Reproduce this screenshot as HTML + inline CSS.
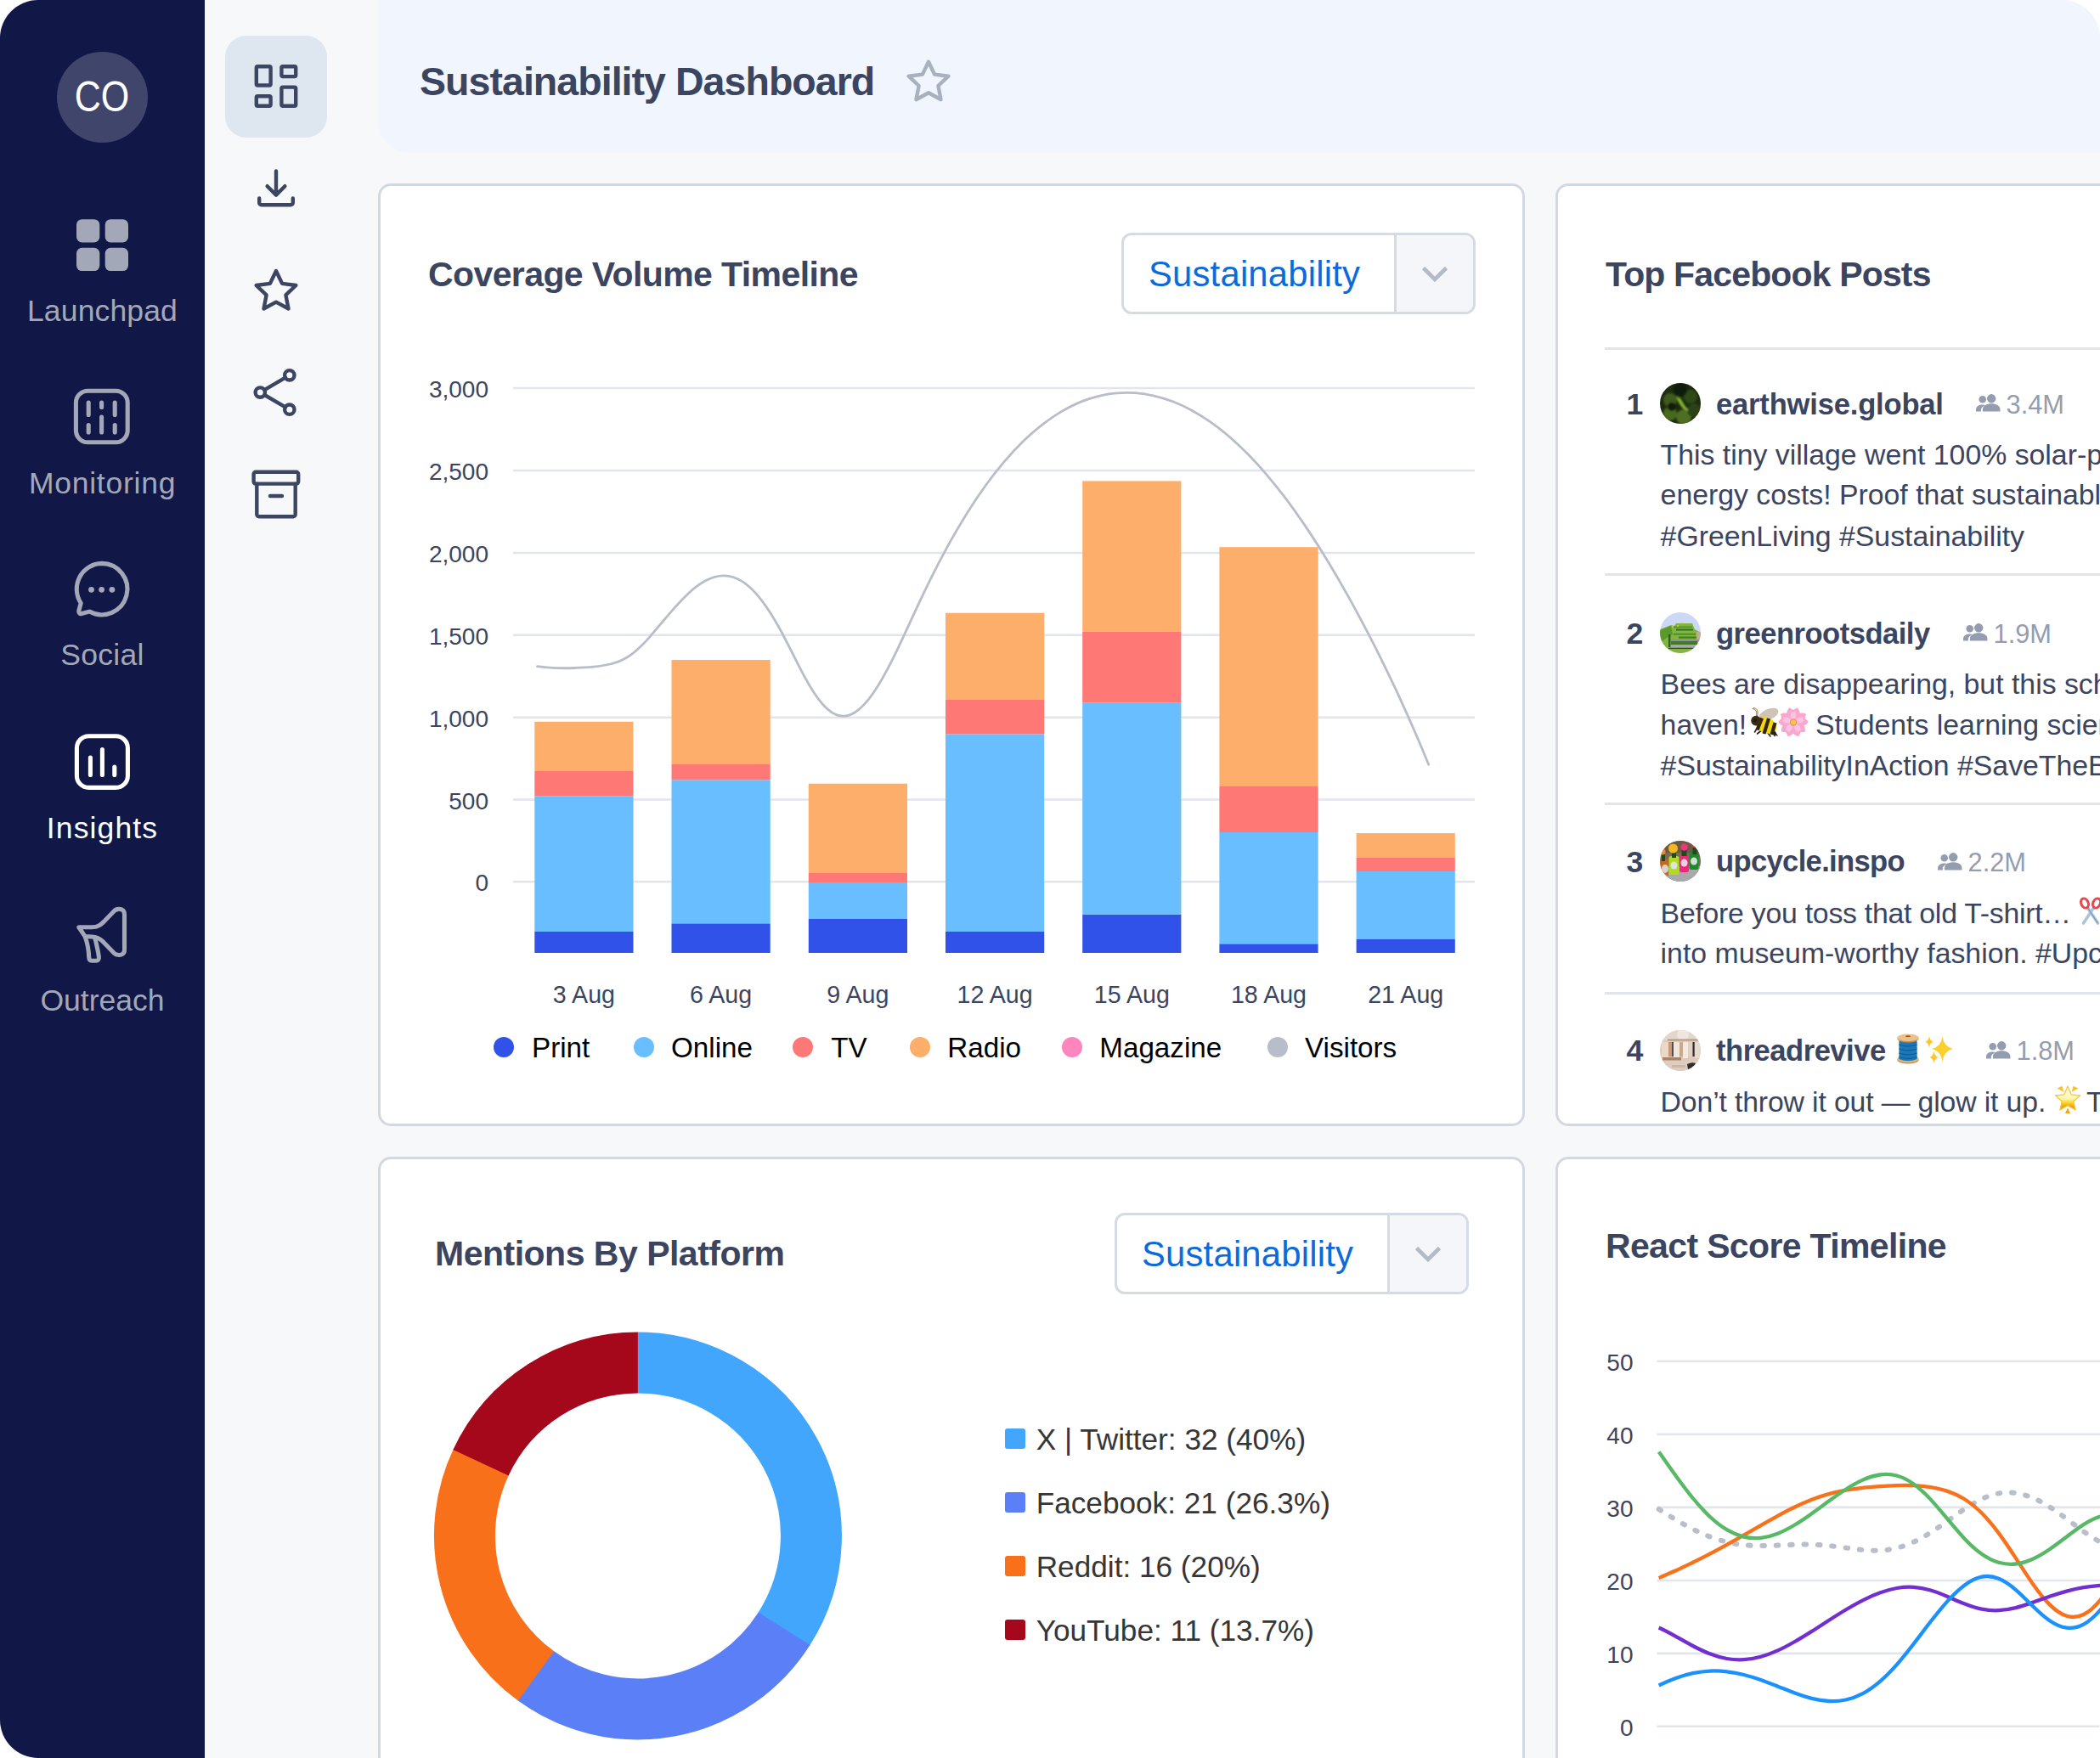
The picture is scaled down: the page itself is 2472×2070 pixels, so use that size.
<!DOCTYPE html>
<html lang="en">
<head>
<meta charset="utf-8">
<title>Sustainability Dashboard</title>
<style>
html,body{margin:0;padding:0;background:#ffffff;}
body{width:2472px;height:2070px;overflow:hidden;font-family:"Liberation Sans",sans-serif;}
#app{position:relative;width:2472px;height:2070px;border-radius:45px;overflow:hidden;background:#f6f8fa;}
#app span,#app h1,#app h2,#app p,#app b{position:absolute;margin:0;line-height:1;white-space:nowrap;font-weight:400;}
#app h1,#app h2,#app b{font-weight:700;}
svg{position:absolute;left:0;top:0;overflow:visible;}
nav.primary{position:absolute;left:0;top:0;width:241px;height:2070px;background:#111746;}
.avatar{position:absolute;left:67px;top:60.5px;width:107px;height:107px;border-radius:50%;background:#40466b;}
nav.secondary{position:absolute;left:241px;top:0;width:170px;height:2070px;background:#f7f8fa;}
.active-btn{position:absolute;left:265px;top:41.5px;width:120px;height:120px;border-radius:25px;background:#dee6f0;}
header.top{position:absolute;left:445px;top:-40px;width:2100px;height:220px;border-radius:0 0 0 38px;background:#f0f5fe;}
.card{position:absolute;box-sizing:border-box;border:3px solid #d2d8e0;border-radius:15px;background:#ffffff;overflow:hidden;}
.dd{position:absolute;box-sizing:border-box;border:3px solid #d5dbe3;border-radius:12px;background:#ffffff;overflow:hidden;}
.dd i{position:absolute;right:0;top:0;bottom:0;width:90px;border-left:3px solid #d5dbe3;background:#f5f6f9;}
.rule{position:absolute;height:3px;background:#e1e5ea;}
.sw{position:absolute;width:24px;height:24px;border-radius:3px;}
.dot{position:absolute;width:24px;height:24px;border-radius:50%;}
</style>
</head>
<body>
<div id="app">

<nav class="primary">
<div class="avatar"></div>
<span style="left:120.0px;top:89.2px;font-size:50px;color:#ffffff;transform:translateX(-50%);transform:translateX(-50%) scaleX(0.86);">CO</span>
<svg width="241" height="2070" viewBox="0 0 241 2070" fill="none" stroke-linecap="round" stroke-linejoin="round">
<g fill="#a3a8b9"><rect x="90" y="258.2" width="27.3" height="27.3" rx="6.5"/><rect x="123.7" y="258.2" width="27.3" height="27.3" rx="6.5"/><rect x="90" y="291.8" width="27.3" height="27.3" rx="6.5"/><rect x="123.7" y="291.8" width="27.3" height="27.3" rx="6.5"/></g>
<g stroke="#a3a8b9" stroke-width="5.1">
<rect x="89.4" y="460.2" width="60.8" height="60.6" rx="14"/>
<path d="M104.2,474v14.5M104.2,500.5v8.5M119.6,474v5.5M119.6,491v18M135.2,474v14.5M135.2,500.5v8.5"/>
<path d="M119.8,663.4a30.2,30.2 0 1 1 -14.6,56.7l-9.200,2.400a2.600,2.600 0 0 1 -3.200,-3.200l2.400,-9.200a30.200,30.200 0 0 1 24.600,-46.700z"/>
</g>
<g fill="#a3a8b9"><circle cx="107.5" cy="694.3" r="3.4"/><circle cx="119.6" cy="694.3" r="3.4"/><circle cx="131.9" cy="694.3" r="3.4"/></g>
<g stroke="#ffffff" stroke-width="5.1">
<rect x="90.4" y="866.8" width="60" height="60.6" rx="14"/>
<path d="M106.4,892v20.5M120.4,882.5v30M134.8,903v9.5"/>
</g>
<g stroke="#a3a8b9" stroke-width="5.1">
<path d="M92.800,1091.800H108C116,1091.800 119.500,1088 123,1084.500L134.300,1072.800C137,1070 141,1070.200 143.500,1071C146,1072 146.500,1074.500 146.500,1077V1118.500C146.500,1123 143,1124.800 140,1124.500C137,1124.300 136,1124 134.500,1122.500L121,1108.500C117,1104.500 113,1103.200 108,1103L100.100,1102.600Z"/>
<path d="M100.500,1104C103,1111 104.500,1120 104.700,1127C104.800,1130 106,1131.300 108,1131.300H113C115.500,1131.300 116.700,1129.500 116.400,1127C115.500,1119 113,1110 111.800,1104"/>
</g>
</svg>
<span style="left:120.5px;top:348.5px;font-size:35.5px;color:#a3a8b9;letter-spacing:0.15px;transform:translateX(-50%);">Launchpad</span>
<span style="left:120.5px;top:551.5px;font-size:35.5px;color:#a3a8b9;letter-spacing:0.75px;transform:translateX(-50%);">Monitoring</span>
<span style="left:120.5px;top:753.9px;font-size:35.5px;color:#a3a8b9;letter-spacing:0.3px;transform:translateX(-50%);">Social</span>
<span style="left:120.5px;top:957.9px;font-size:35.5px;color:#ffffff;letter-spacing:1.15px;transform:translateX(-50%);">Insights</span>
<span style="left:120.5px;top:1160.9px;font-size:35.5px;color:#a3a8b9;transform:translateX(-50%);">Outreach</span>
</nav>
<nav class="secondary"></nav>
<header class="top"></header>
<div class="active-btn"></div>
<svg width="2472" height="700" viewBox="0 0 2472 700" fill="none" stroke="#3c4662" stroke-width="4.4" stroke-linecap="round" stroke-linejoin="round">
<rect x="301.8" y="78.2" width="16.8" height="22.3" rx="1.5"/><rect x="331.4" y="78.2" width="16.8" height="11.9" rx="1.5"/><rect x="301.8" y="113.2" width="16.8" height="11.6" rx="1.5"/><rect x="331.4" y="102.6" width="16.8" height="22.2" rx="1.5"/>
<path d="M325,201.5v27.5M314.6,219.2l10.400,10.400l10.400,-10.400M305.2,233.500v5.200a2.500,2.500 0 0 0 2.500,2.500h34.600a2.500,2.500 0 0 0 2.500,-2.500v-5.200"/>
<path d="M325.0,319.0 L332.1,333.9 L348.4,336.0 L336.4,347.3 L339.5,363.5 L325.0,355.6 L310.5,363.5 L313.6,347.3 L301.6,336.0 L317.9,333.9Z"/>
<circle cx="340.8" cy="441.8" r="5.7"/><circle cx="306.3" cy="462.1" r="5.7"/><circle cx="340.8" cy="482.2" r="5.7"/><path d="M311.300,459.200l24.600,-14.500M311.300,465l24.600,14.300"/>
<rect x="298.600" y="555.800" width="52.600" height="13.800" rx="2.500"/><path d="M302.300,569.600v36.200a2.500,2.500 0 0 0 2.500,2.500h40.400a2.500,2.500 0 0 0 2.500,-2.500v-36.200M318,584h14"/>
<path stroke="#a9b0be" d="M1093.0,72.7 L1100.1,87.6 L1116.4,89.7 L1104.4,101.0 L1107.5,117.2 L1093.0,109.3 L1078.5,117.2 L1081.6,101.0 L1069.6,89.7 L1085.9,87.6Z"/>
</svg>
<h1 style="left:494.0px;top:72.6px;font-size:46.5px;font-weight:700;color:#3b4560;letter-spacing:-0.95px;">Sustainability Dashboard</h1>
<section class="card" style="left:445px;top:216px;width:1350px;height:1110px"></section>
<h2 style="left:504.0px;top:303.3px;font-size:41px;font-weight:700;color:#3b4560;letter-spacing:-0.6px;">Coverage Volume Timeline</h2>
<div class="dd" style="left:1320px;top:274px;width:417px;height:96px"><i></i></div>
<span style="left:1352.0px;top:301.6px;font-size:41.8px;color:#0c6bd9;letter-spacing:0.2px;">Sustainability</span>
<svg width="2472" height="2070" viewBox="0 0 2472 2070" fill="none" stroke="#b4bbc8" stroke-width="4.6" stroke-linecap="butt" stroke-linejoin="miter"><path d="M1675.5,315.5l13.500,13.500l13.500,-13.500"/></svg>
<svg width="2472" height="2070" viewBox="0 0 2472 2070" fill="none">
<g stroke="#e2e5eb" stroke-width="2.6"><path d="M604,457H1736"/><path d="M604,554H1736"/><path d="M604,651H1736"/><path d="M604,747.8H1736"/><path d="M604,844.7H1736"/><path d="M604,941.5H1736"/><path d="M604,1038.3H1736"/></g>
<path d="M632.5,784.6 C639.8,785.7 647.2,786.4 654.5,786.6 C661.8,786.8 669.2,786.8 676.5,786.5 C683.8,786.2 691.2,785.8 698.5,785.1 C705.8,784.4 713.2,783.4 720.5,781.5 C727.8,779.6 735.2,776.5 742.5,771.2 C749.8,765.9 757.2,758.6 764.5,750.3 C771.8,742.0 779.2,732.9 786.5,724.3 C793.8,715.7 801.2,707.4 808.5,700.4 C815.8,693.4 823.2,687.7 830.5,683.8 C837.8,679.9 845.2,677.8 852.5,677.9 C859.8,678.0 867.2,680.4 874.5,685.2 C881.8,690.0 889.2,697.3 896.5,706.8 C903.8,716.3 911.2,728.1 918.5,741.5 C925.8,754.9 933.2,770.0 940.5,784.3 C947.8,798.6 955.2,811.8 962.5,821.8 C969.8,831.8 977.2,838.7 984.5,841.6 C991.8,844.5 999.2,843.3 1006.5,838.7 C1013.8,834.1 1021.2,826.0 1028.5,815.3 C1035.8,804.6 1043.2,791.3 1050.5,776.7 C1057.8,762.1 1065.2,746.1 1072.5,730.2 C1079.8,714.3 1087.2,698.6 1094.5,683.7 C1101.8,668.8 1109.2,654.7 1116.5,641.4 C1123.8,628.1 1131.2,615.7 1138.5,604.0 C1145.8,592.3 1153.2,581.4 1160.5,571.3 C1167.8,561.2 1175.2,551.8 1182.5,543.2 C1189.8,534.6 1197.2,526.8 1204.5,519.6 C1211.8,512.5 1219.2,506.0 1226.5,500.3 C1233.8,494.6 1241.2,489.5 1248.5,485.1 C1255.8,480.7 1263.2,477.0 1270.5,473.9 C1277.8,470.8 1285.2,468.4 1292.5,466.6 C1299.8,464.8 1307.2,463.5 1314.5,462.9 C1321.8,462.3 1329.2,462.2 1336.5,462.7 C1343.8,463.2 1351.2,464.4 1358.5,466.1 C1365.8,467.8 1373.2,470.0 1380.5,472.8 C1387.8,475.6 1395.2,479.0 1402.5,483.0 C1409.8,487.0 1417.2,491.5 1424.5,496.6 C1431.8,501.7 1439.2,507.4 1446.5,513.7 C1453.8,520.0 1461.2,526.9 1468.5,534.3 C1475.8,541.7 1483.2,549.7 1490.5,558.3 C1497.8,566.9 1505.2,576.0 1512.5,585.7 C1519.8,595.4 1527.2,605.6 1534.5,616.4 C1541.8,627.2 1549.2,638.4 1556.5,650.2 C1563.8,662.0 1571.2,674.3 1578.5,687.1 C1585.8,699.9 1593.2,713.1 1600.5,726.8 C1607.8,740.5 1615.2,754.6 1622.5,769.3 C1629.8,784.0 1637.2,799.2 1644.5,814.9 C1651.8,830.6 1659.2,847.0 1666.5,864.0 C1671.6,875.7 1676.6,887.8 1681.7,900.2" stroke="#b7bdc9" stroke-width="2.8" stroke-linecap="round"/>
<rect x="629.3" y="1097" width="116.2" height="25.0" fill="#3052e8"/>
<rect x="629.3" y="937.3" width="116.2" height="159.7" fill="#69beff"/>
<rect x="629.3" y="908" width="116.2" height="29.3" fill="#fe7876"/>
<rect x="629.3" y="849.8" width="116.2" height="58.2" fill="#fdae6b"/>
<rect x="790.5" y="1087.3" width="116.2" height="34.7" fill="#3052e8"/>
<rect x="790.5" y="918.3" width="116.2" height="169.0" fill="#69beff"/>
<rect x="790.5" y="900" width="116.2" height="18.3" fill="#fe7876"/>
<rect x="790.5" y="777" width="116.2" height="123.0" fill="#fdae6b"/>
<rect x="951.8" y="1082" width="116.2" height="40.0" fill="#3052e8"/>
<rect x="951.8" y="1039" width="116.2" height="43.0" fill="#69beff"/>
<rect x="951.8" y="1028" width="116.2" height="11.0" fill="#fe7876"/>
<rect x="951.8" y="922.7" width="116.2" height="105.3" fill="#fdae6b"/>
<rect x="1113" y="1097" width="116.2" height="25.0" fill="#3052e8"/>
<rect x="1113" y="864.4" width="116.2" height="232.6" fill="#69beff"/>
<rect x="1113" y="823.4" width="116.2" height="41.0" fill="#fe7876"/>
<rect x="1113" y="721.7" width="116.2" height="101.7" fill="#fdae6b"/>
<rect x="1274.2" y="1076.7" width="116.2" height="45.3" fill="#3052e8"/>
<rect x="1274.2" y="827.2" width="116.2" height="249.5" fill="#69beff"/>
<rect x="1274.2" y="743.5" width="116.2" height="83.7" fill="#fe7876"/>
<rect x="1274.2" y="566.4" width="116.2" height="177.1" fill="#fdae6b"/>
<rect x="1435.4" y="1111.3" width="116.2" height="10.7" fill="#3052e8"/>
<rect x="1435.4" y="980" width="116.2" height="131.3" fill="#69beff"/>
<rect x="1435.4" y="926" width="116.2" height="54.0" fill="#fe7876"/>
<rect x="1435.4" y="644.2" width="116.2" height="281.8" fill="#fdae6b"/>
<rect x="1596.6" y="1106" width="116.2" height="16.0" fill="#3052e8"/>
<rect x="1596.6" y="1026" width="116.2" height="80.0" fill="#69beff"/>
<rect x="1596.6" y="1010" width="116.2" height="16.0" fill="#fe7876"/>
<rect x="1596.6" y="981" width="116.2" height="29.0" fill="#fdae6b"/>
</svg>
<span style="left:575.0px;top:445.1px;font-size:28px;color:#3b4560;transform:translateX(-100%);">3,000</span>
<span style="left:575.0px;top:542.1px;font-size:28px;color:#3b4560;transform:translateX(-100%);">2,500</span>
<span style="left:575.0px;top:639.1px;font-size:28px;color:#3b4560;transform:translateX(-100%);">2,000</span>
<span style="left:575.0px;top:735.9px;font-size:28px;color:#3b4560;transform:translateX(-100%);">1,500</span>
<span style="left:575.0px;top:832.8px;font-size:28px;color:#3b4560;transform:translateX(-100%);">1,000</span>
<span style="left:575.0px;top:929.6px;font-size:28px;color:#3b4560;transform:translateX(-100%);">500</span>
<span style="left:575.0px;top:1026.4px;font-size:28px;color:#3b4560;transform:translateX(-100%);">0</span>
<span style="left:687.4px;top:1157.1px;font-size:28.6px;color:#3b4560;transform:translateX(-50%);">3 Aug</span>
<span style="left:848.6px;top:1157.1px;font-size:28.6px;color:#3b4560;transform:translateX(-50%);">6 Aug</span>
<span style="left:1009.8px;top:1157.1px;font-size:28.6px;color:#3b4560;transform:translateX(-50%);">9 Aug</span>
<span style="left:1171.1px;top:1157.1px;font-size:28.6px;color:#3b4560;transform:translateX(-50%);">12 Aug</span>
<span style="left:1332.3px;top:1157.1px;font-size:28.6px;color:#3b4560;transform:translateX(-50%);">15 Aug</span>
<span style="left:1493.5px;top:1157.1px;font-size:28.6px;color:#3b4560;transform:translateX(-50%);">18 Aug</span>
<span style="left:1654.7px;top:1157.1px;font-size:28.6px;color:#3b4560;transform:translateX(-50%);">21 Aug</span>
<div class="dot" style="left:581.3px;top:1220.7px;background:#3052e8"></div>
<span style="left:626.0px;top:1216.9px;font-size:33.2px;color:#000000;">Print</span>
<div class="dot" style="left:745.7px;top:1220.7px;background:#69beff"></div>
<span style="left:790.0px;top:1216.9px;font-size:33.2px;color:#000000;">Online</span>
<div class="dot" style="left:933.3px;top:1220.7px;background:#fe7876"></div>
<span style="left:978.3px;top:1216.9px;font-size:33.2px;color:#000000;">TV</span>
<div class="dot" style="left:1070.7px;top:1220.7px;background:#fdae6b"></div>
<span style="left:1115.3px;top:1216.9px;font-size:33.2px;color:#000000;">Radio</span>
<div class="dot" style="left:1249.7px;top:1220.7px;background:#fc86bd"></div>
<span style="left:1294.3px;top:1216.9px;font-size:33.2px;color:#000000;">Magazine</span>
<div class="dot" style="left:1491.7px;top:1220.7px;background:#b7bdc9"></div>
<span style="left:1536.0px;top:1216.9px;font-size:33.2px;color:#000000;">Visitors</span>
<section class="card" style="left:1831px;top:216px;width:900px;height:1110px">
<h2 style="left:56.0px;top:83.9px;font-size:41px;font-weight:700;color:#3b4560;letter-spacing:-0.85px;">Top Facebook Posts</h2>
<div class="rule" style="left:55px;top:189.5px;width:900px"></div>
<b style="left:80.6px;top:239.9px;font-size:35.6px;font-weight:700;color:#3b4560;">1</b>
<svg width="48" height="48" viewBox="0 0 48 48" style="left:119.6px;top:231.6px;border-radius:50%;overflow:hidden"><defs><filter id="b1"><feGaussianBlur stdDeviation="1.1"/></filter></defs><rect width="48" height="48" fill="#1d2c10"/><g filter="url(#b1)"><circle cx="12" cy="20" r="8" fill="#3f5a1c"/><circle cx="36" cy="16" r="8" fill="#2f4a18"/><circle cx="24" cy="8" r="8" fill="#0f1a09"/><circle cx="12" cy="36" r="8" fill="#4a6b1f"/><circle cx="28" cy="40" r="9" fill="#4f6e22"/><circle cx="40" cy="32" r="8" fill="#2a4215"/><circle cx="14" cy="28" r="5" fill="#0f1a09"/><path d="M19,16l5,2l8,13l-5,-1l-5,-7z" fill="#86b62b"/><path d="M27,29l5,1l1,3z" fill="#b5d86a"/></g></svg>
<b style="left:186.0px;top:239.7px;font-size:34.6px;font-weight:700;color:#3b4560;letter-spacing:-0.2px;">earthwise.global</b>
<svg width="28" height="22.4" viewBox="0 0 30 24" style="left:492.0px;top:243.9px" fill="#949db0"><circle cx="19.500" cy="6.800" r="5.600"/><path d="M8.500,23v-2.600c0,-5 5.200,-7.400 11,-7.400s11,2.400 11,7.400v2.600z"/><circle cx="8.300" cy="7.800" r="4.600"/><path d="M0,23v-2.200c0,-4.200 3.900,-6.300 8.300,-6.300c1.300,0 2.500,0.200 3.600,0.500c-3.400,1.500 -5.600,3.600 -5.600,5.800v2.200z"/></svg>
<span style="left:527.5px;top:242.9px;font-size:30.8px;color:#949db0;">3.4M</span>
<p style="left:120.6px;top:299.7px;font-size:33.8px;color:#3b4560;">This tiny village went 100% solar-powered and slashed its</p>
<p style="left:120.6px;top:347.3px;font-size:33.8px;color:#3b4560;">energy costs! Proof that sustainable living really works.</p>
<p style="left:120.6px;top:395.7px;font-size:33.8px;color:#3b4560;">#GreenLiving #Sustainability</p>
<div class="rule" style="left:55px;top:456.3px;width:900px"></div>
<b style="left:80.6px;top:509.7px;font-size:35.6px;font-weight:700;color:#3b4560;">2</b>
<svg width="48" height="48" viewBox="0 0 48 48" style="left:119.6px;top:502.0px;border-radius:50%;overflow:hidden"><defs><filter id="b2"><feGaussianBlur stdDeviation="0.6"/></filter></defs><rect width="48" height="48" fill="#cbd8f6"/><g filter="url(#b2)"><path d="M0,20l13,-5l4,1l2,-3h19l3,7l7,4v24H0z" fill="#82b53c"/><path d="M0,21l13,-5l2,10l-15,9z" fill="#5a9a2c"/><rect x="16" y="16.500" width="22" height="1.600" fill="#4f8f2a"/><rect x="19" y="19.500" width="20" height="2" fill="#2f6f1e"/><rect x="16" y="24.800" width="26" height="1.800" fill="#4a8a28"/><rect x="22" y="28.500" width="21" height="2.200" fill="#3c7f24"/><rect x="13" y="31.800" width="32" height="2.200" fill="#8d9297"/><rect x="13" y="34" width="31" height="4.200" fill="#3f7a22"/><rect x="10" y="38.200" width="35" height="3.600" fill="#a6aab0"/><rect x="10" y="41.800" width="34" height="1.400" fill="#3b3f3a"/><rect x="6" y="43.200" width="40" height="5" fill="#86b53c"/><rect x="43" y="23" width="5" height="9" fill="#c7a98f"/><rect x="10" y="26" width="2.400" height="15" fill="#2f5f20"/><circle cx="15" cy="17" r="0.900" fill="#f4d21e"/><circle cx="21" cy="16" r="0.900" fill="#f4d21e"/><circle cx="26" cy="12.500" r="0.900" fill="#f4d21e"/></g></svg>
<b style="left:186.0px;top:509.5px;font-size:34.6px;font-weight:700;color:#3b4560;letter-spacing:-0.52px;">greenrootsdaily</b>
<svg width="28" height="22.4" viewBox="0 0 30 24" style="left:477.0px;top:514.3px" fill="#949db0"><circle cx="19.500" cy="6.800" r="5.600"/><path d="M8.500,23v-2.600c0,-5 5.200,-7.400 11,-7.400s11,2.400 11,7.400v2.600z"/><circle cx="8.300" cy="7.800" r="4.600"/><path d="M0,23v-2.200c0,-4.200 3.900,-6.300 8.300,-6.300c1.300,0 2.500,0.200 3.600,0.500c-3.400,1.500 -5.600,3.600 -5.600,5.800v2.200z"/></svg>
<span style="left:512.5px;top:512.7px;font-size:30.8px;color:#949db0;">1.9M</span>
<p style="left:120.6px;top:570.3px;font-size:33.8px;color:#3b4560;">Bees are disappearing, but this school built a pollinator</p>
<p style="left:120.6px;top:665.7px;font-size:33.8px;color:#3b4560;">#SustainabilityInAction #SaveTheBees</p>
<div class="rule" style="left:55px;top:726.4px;width:900px"></div>
<b style="left:80.6px;top:778.5px;font-size:35.6px;font-weight:700;color:#3b4560;">3</b>
<svg width="48" height="48" viewBox="0 0 48 48" style="left:119.6px;top:771.4px;border-radius:50%;overflow:hidden"><defs><filter id="b3"><feGaussianBlur stdDeviation="0.7"/></filter></defs><rect width="48" height="48" fill="#7d6a55"/><g filter="url(#b3)"><rect y="0" width="48" height="14" fill="#6b5a48"/><path d="M0,30h48v18H0z" fill="#a9a8ad"/><path d="M0,24l10,-2v20l-8,-6z" fill="#c8661c"/><rect x="10.500" y="18" width="12" height="22" rx="2.500" fill="#b4da1e"/><rect x="23" y="17" width="11" height="20" rx="2.500" fill="#f0287c"/><rect x="34.500" y="14" width="11" height="20" rx="2.500" fill="#1f8a2c"/><rect x="14" y="13" width="5" height="7" fill="#23491c"/><rect x="25.500" y="10" width="6" height="8" fill="#23491c"/><rect x="38.500" y="7" width="5" height="9" fill="#23491c"/><rect x="2" y="16" width="4" height="8" fill="#23491c"/><circle cx="15.500" cy="9" r="5.500" fill="#f4b81a"/><circle cx="28.500" cy="7.500" r="4.200" fill="#f0347c"/><circle cx="40" cy="5" r="3" fill="#e33a3a"/><circle cx="3" cy="13" r="3.500" fill="#f08a2a"/><ellipse cx="16.500" cy="29" rx="4" ry="4.500" fill="#d9e6e0"/><ellipse cx="28.500" cy="26" rx="4" ry="4.500" fill="#e6d6dc"/><ellipse cx="40" cy="24" rx="4" ry="4.500" fill="#cfe3d4"/><ellipse cx="6" cy="33" rx="4" ry="5" fill="#e0d2c4"/></g></svg>
<b style="left:186.0px;top:778.3px;font-size:34.6px;font-weight:700;color:#3b4560;letter-spacing:-0.66px;">upcycle.inspo</b>
<svg width="28" height="22.4" viewBox="0 0 30 24" style="left:447.0px;top:783.7px" fill="#949db0"><circle cx="19.500" cy="6.800" r="5.600"/><path d="M8.500,23v-2.600c0,-5 5.200,-7.400 11,-7.400s11,2.400 11,7.400v2.600z"/><circle cx="8.300" cy="7.800" r="4.600"/><path d="M0,23v-2.200c0,-4.200 3.900,-6.300 8.300,-6.300c1.300,0 2.500,0.200 3.600,0.500c-3.400,1.500 -5.600,3.600 -5.600,5.800v2.200z"/></svg>
<span style="left:482.5px;top:781.5px;font-size:30.8px;color:#949db0;">2.2M</span>
<p style="left:120.6px;top:887.3px;font-size:33.8px;color:#3b4560;">into museum-worthy fashion. #Upcycling #SlowFashion</p>
<div class="rule" style="left:55px;top:948.5px;width:900px"></div>
<b style="left:80.6px;top:1000.7px;font-size:35.6px;font-weight:700;color:#3b4560;">4</b>
<svg width="48" height="48" viewBox="0 0 48 48" style="left:119.6px;top:993.6px;border-radius:50%;overflow:hidden"><defs><filter id="b4"><feGaussianBlur stdDeviation="0.7"/></filter></defs><rect width="48" height="48" fill="#dccbbd"/><g filter="url(#b4)"><rect width="48" height="12" fill="#e3d6ca"/><circle cx="27" cy="5" r="7" fill="#f0e6de"/><rect x="9" y="10.500" width="36" height="2" fill="#b69a84"/><rect x="2" y="14" width="8" height="18" fill="#ead9c8"/><rect x="10" y="14" width="4" height="17" fill="#c99875"/><rect x="14.200" y="14" width="1.600" height="17" fill="#2e3238"/><rect x="16" y="14" width="7" height="19" fill="#f1e6da"/><rect x="23" y="14" width="4" height="17" fill="#d0a683"/><rect x="27" y="14" width="6" height="19" fill="#f3ebe3"/><rect x="33" y="14" width="5" height="17" fill="#e3d0bd"/><rect x="38.500" y="14" width="2.200" height="17" fill="#2b2e33"/><rect x="41" y="14" width="6" height="19" fill="#e7d9cc"/><rect x="3" y="32" width="22" height="3.500" fill="#a98363"/><rect x="0" y="36" width="48" height="12" fill="#dccdc0"/><rect x="14" y="41" width="16" height="3" fill="#cbb8a8"/><path d="M32,40q6,-3 10,-1l-3,6l-6,1z" fill="#2f2e2c"/></g></svg>
<b style="left:186.0px;top:1000.5px;font-size:34.6px;font-weight:700;color:#3b4560;letter-spacing:-0.5px;">threadrevive</b>
<svg width="28" height="22.4" viewBox="0 0 30 24" style="left:504.0px;top:1005.9px" fill="#949db0"><circle cx="19.500" cy="6.800" r="5.600"/><path d="M8.500,23v-2.600c0,-5 5.200,-7.400 11,-7.400s11,2.400 11,7.400v2.600z"/><circle cx="8.300" cy="7.800" r="4.600"/><path d="M0,23v-2.200c0,-4.200 3.900,-6.300 8.300,-6.300c1.300,0 2.500,0.200 3.600,0.500c-3.400,1.500 -5.600,3.600 -5.600,5.800v2.200z"/></svg>
<span style="left:539.5px;top:1003.7px;font-size:30.8px;color:#949db0;">1.8M</span>
<p style="left:120.6px;top:618.3px;font-size:33.8px;color:#3b4560;">haven!</p>
<svg width="32" height="34" viewBox="0 0 32 34" style="left:227.4px;top:614.4px"><ellipse cx="21" cy="8" rx="12" ry="6.200" fill="#cfc2b6" transform="rotate(-22 21 8)"/><path d="M6.500,10.500C7.500,5 6,1.800 1.500,1.500M7.500,10.500C9,4.500 7.500,0.800 3,0.600" stroke="#a06c4c" stroke-width="1" fill="none"/><path d="M7,25l-2.500,4M12,27.500l-4.500,3.500M20,30l3,4M26,29l2,4.500" stroke="#2a1f0e" stroke-width="1.600" stroke-linecap="round"/><path d="M27,25l5,9l-7,-3z" fill="#2a1f0e"/><ellipse cx="18" cy="21" rx="12.500" ry="9.200" fill="#f4d70c" transform="rotate(24 18 21)"/><path d="M13,12.500l-5.500,14M21,13l-5.500,18M28.500,18l-4,14" stroke="#33260f" stroke-width="4.200"/><circle cx="6" cy="15.600" r="5.800" fill="#3b2b12"/><circle cx="5.200" cy="15.200" r="2" fill="#1b1a1f"/></svg>
<svg width="34" height="33" viewBox="0 0 34 33" style="left:260.4px;top:614.6px"><path d="M17,16.500c-8.800,-3.500 -9.800,-12.300 -4.600,-17.200l4.600,2.600l4.600,-2.600c5.200,4.900 4.200,13.700 -4.600,17.200z" fill="#f9a7cd" transform="rotate(0 17 16.500)"/><path d="M17,16.500c-8.800,-3.500 -9.800,-12.300 -4.600,-17.200l4.600,2.600l4.600,-2.600c5.200,4.900 4.200,13.700 -4.600,17.200z" fill="#f9a7cd" transform="rotate(72 17 16.500)"/><path d="M17,16.500c-8.800,-3.500 -9.800,-12.300 -4.600,-17.200l4.600,2.600l4.600,-2.600c5.200,4.900 4.200,13.700 -4.600,17.200z" fill="#f9a7cd" transform="rotate(144 17 16.500)"/><path d="M17,16.500c-8.800,-3.500 -9.800,-12.300 -4.600,-17.200l4.600,2.600l4.600,-2.600c5.200,4.900 4.200,13.700 -4.600,17.200z" fill="#f9a7cd" transform="rotate(216 17 16.500)"/><path d="M17,16.500c-8.800,-3.500 -9.800,-12.300 -4.600,-17.200l4.600,2.600l4.600,-2.600c5.200,4.900 4.200,13.700 -4.600,17.200z" fill="#f9a7cd" transform="rotate(288 17 16.500)"/><path d="M17,15c-3.600,-2.500 -4.200,-8 -1.800,-11.500l1.800,1.200l1.800,-1.200c2.400,3.500 1.800,9 -1.800,11.500z" fill="#fcc4e0" transform="rotate(0 17 16.500)"/><path d="M17,15c-3.600,-2.500 -4.200,-8 -1.800,-11.500l1.800,1.200l1.800,-1.200c2.400,3.500 1.800,9 -1.800,11.500z" fill="#fcc4e0" transform="rotate(72 17 16.500)"/><path d="M17,15c-3.600,-2.500 -4.200,-8 -1.800,-11.500l1.800,1.200l1.800,-1.200c2.400,3.500 1.800,9 -1.800,11.500z" fill="#fcc4e0" transform="rotate(144 17 16.500)"/><path d="M17,15c-3.600,-2.500 -4.200,-8 -1.800,-11.500l1.800,1.200l1.800,-1.200c2.400,3.500 1.800,9 -1.800,11.500z" fill="#fcc4e0" transform="rotate(216 17 16.500)"/><path d="M17,15c-3.600,-2.500 -4.200,-8 -1.800,-11.500l1.800,1.200l1.800,-1.200c2.400,3.500 1.800,9 -1.800,11.500z" fill="#fcc4e0" transform="rotate(288 17 16.500)"/><circle cx="17" cy="16.500" r="4.200" fill="#f08a76"/><circle cx="17" cy="16.500" r="3" fill="#f7c744"/></svg>
<p style="left:303.0px;top:618.3px;font-size:33.8px;color:#3b4560;">Students learning science hands-on in the garden.</p>
<p style="left:120.6px;top:840.1px;font-size:33.8px;color:#3b4560;letter-spacing:-0.25px;">Before you toss that old T-shirt…</p>
<svg width="32" height="34" viewBox="0 0 32 34" style="left:611.0px;top:836.5px"><path d="M12.500,13l12,18M19.500,13l-12,18" stroke="#a9c4dd" stroke-width="3.600" stroke-linecap="round"/><path d="M12.500,13l12,18" stroke="#7f95aa" stroke-width="1.100"/><ellipse cx="9" cy="7.500" rx="4.200" ry="5.800" fill="none" stroke="#e8474c" stroke-width="3" transform="rotate(-24 9 7.500)"/><ellipse cx="23" cy="7.500" rx="4.200" ry="5.800" fill="none" stroke="#e8474c" stroke-width="3" transform="rotate(24 23 7.500)"/></svg>
<p style="left:120.6px;top:1062.3px;font-size:33.8px;color:#3b4560;letter-spacing:-0.15px;">Don’t throw it out — glow it up.</p>
<svg width="32" height="34" viewBox="0 0 32 34" style="left:583.7px;top:1058.6px"><defs><linearGradient id="gs" x1="0" y1="0" x2="0" y2="1"><stop offset="0.250" stop-color="#fffbe0"/><stop offset="0.520" stop-color="#fff6a8"/><stop offset="0.680" stop-color="#fbd92c"/><stop offset="0.850" stop-color="#f19f14"/></linearGradient></defs><polygon points="16.0,1.1 20.2,10.8 30.7,11.8 22.8,18.8 25.1,29.1 16.0,23.8 6.9,29.1 9.2,18.8 1.3,11.8 11.8,10.8" fill="url(#gs)" stroke="#f7c530" stroke-width="1.200" stroke-linejoin="round"/><path d="M3.500,3.500l6,-2.800l1.800,7z" fill="#f7c22a"/><path d="M28.500,3.500l-6,-2.800l-1.800,7z" fill="#f7c22a"/><path d="M16,26.500l3,6.500h-6z" fill="#f2a516"/></svg>
<p style="left:622.0px;top:1062.3px;font-size:33.8px;color:#3b4560;">This thrifted lamp got a second life.</p>
<svg width="26" height="36" viewBox="0 0 26 36" style="left:399.0px;top:997.8px"><ellipse cx="13" cy="31" rx="12.600" ry="4.600" fill="#c98f4e"/><ellipse cx="13" cy="29.800" rx="12.600" ry="4.200" fill="#e6b77a"/><path d="M2.400,8.500h21.200v21.500c-7,3 -14,3 -21.200,0z" fill="#1c78b8"/><path d="M2.400,13c7,2.500 14,2.500 21.200,0M2.400,18c7,2.500 14,2.500 21.200,0M2.400,23c7,2.500 14,2.500 21.200,0M2.400,27.500c7,2.500 14,2.500 21.200,0" stroke="#115f97" stroke-width="1.300" fill="none"/><ellipse cx="13" cy="5.800" rx="12.600" ry="4.800" fill="#c98f4e"/><ellipse cx="13" cy="4.800" rx="12.600" ry="4.300" fill="#ecc088"/><ellipse cx="13" cy="3.200" rx="3" ry="0.900" fill="#8a5a2c"/></svg>
<svg width="34" height="34" viewBox="0 0 34 34" style="left:431.6px;top:999.5px"><path d="M20.500,1q1.400,12.500 12.500,15q-11.100,2.500 -12.500,16q-1.400,-13.500 -12.500,-16q11.100,-2.500 12.500,-15z" fill="#fbd02c"/><path d="M5,0.500q0.600,6 4.600,7.200q-4,1.200 -4.600,7.200q-0.600,-6 -4.600,-7.200q4,-1.200 4.600,-7.200z" fill="#fbc62e"/><path d="M10.500,18.500q0.600,6 5,7.400q-4.400,1.400 -5,7.400q-0.600,-6 -5,-7.400q4.400,-1.400 5,-7.400z" fill="#fbc62e"/></svg>
</section>
<section class="card" style="left:445px;top:1362px;width:1350px;height:900px"></section>
<h2 style="left:512.0px;top:1456.3px;font-size:41px;font-weight:700;color:#3b4560;letter-spacing:-0.5px;">Mentions By Platform</h2>
<div class="dd" style="left:1312px;top:1428px;width:417px;height:96px"><i></i></div>
<span style="left:1344.0px;top:1455.6px;font-size:41.8px;color:#0c6bd9;letter-spacing:0.2px;">Sustainability</span>
<svg width="2472" height="2070" viewBox="0 0 2472 2070" fill="none" stroke="#b4bbc8" stroke-width="4.6" stroke-linecap="butt" stroke-linejoin="miter"><path d="M1667.5,1469.5l13.500,13.500l13.500,-13.500"/></svg>
<svg width="2472" height="2070" viewBox="0 0 2472 2070" fill="none" stroke-width="72"><path d="M750.9,1604.4A204,204 0 0 1 922.6,1918.6" stroke="#42a6fc"/><path d="M923.1,1917.7A204,204 0 0 1 630.1,1972.8" stroke="#5b7ff6"/><path d="M631.0,1973.4A204,204 0 0 1 566.5,1721.2" stroke="#f9701b"/><path d="M566.0,1722.2A204,204 0 0 1 750.9,1604.4" stroke="#a5071b"/></svg>
<div class="sw" style="left:1183px;top:1682.0px;background:#42a6fc"></div>
<span style="left:1219.7px;top:1677.0px;font-size:35.2px;color:#363636;">X | Twitter: 32 (40%)</span>
<div class="sw" style="left:1183px;top:1757.0px;background:#5b7ff6"></div>
<span style="left:1219.7px;top:1752.0px;font-size:35.2px;color:#363636;">Facebook: 21 (26.3%)</span>
<div class="sw" style="left:1183px;top:1832.0px;background:#f9701b"></div>
<span style="left:1219.7px;top:1827.0px;font-size:35.2px;color:#363636;">Reddit: 16 (20%)</span>
<div class="sw" style="left:1183px;top:1907.3px;background:#a5071b"></div>
<span style="left:1219.7px;top:1902.3px;font-size:35.2px;color:#363636;">YouTube: 11 (13.7%)</span>
<section class="card" style="left:1831px;top:1362px;width:900px;height:900px"></section>
<h2 style="left:1890.0px;top:1447.3px;font-size:41px;font-weight:700;color:#3b4560;letter-spacing:-0.65px;">React Score Timeline</h2>
<svg width="2472" height="2070" viewBox="0 0 2472 2070" fill="none" stroke-linecap="round">
<g stroke="#e2e5eb" stroke-width="2.6"><path d="M1951.500,1602.7H2480"/><path d="M1951.500,1688.9H2480"/><path d="M1951.500,1774.9H2480"/><path d="M1951.500,1861H2480"/><path d="M1951.500,1946.9H2480"/><path d="M1951.500,2032.8H2480"/></g>
<path d="M1952.7,1777.0 C1959.4,1781.2 1966.0,1785.4 1972.7,1789.4 C1979.4,1793.4 1986.0,1797.1 1992.7,1800.5 C1999.4,1803.9 2006.0,1806.9 2012.7,1809.4 C2019.4,1811.9 2026.0,1814.0 2032.7,1815.6 C2039.4,1817.2 2046.0,1818.4 2052.7,1819.1 C2059.4,1819.8 2066.0,1820.1 2072.7,1820.1 C2079.4,1820.1 2086.0,1819.9 2092.7,1819.6 C2099.4,1819.3 2106.0,1818.9 2112.7,1818.7 C2119.4,1818.5 2126.0,1818.4 2132.7,1818.6 C2139.4,1818.8 2146.0,1819.3 2152.7,1820.0 C2159.4,1820.7 2166.0,1821.6 2172.7,1822.5 C2179.4,1823.4 2186.0,1824.3 2192.7,1825.0 C2199.4,1825.7 2206.0,1826.0 2212.7,1825.7 C2219.4,1825.4 2226.0,1824.5 2232.7,1822.8 C2239.4,1821.1 2246.0,1818.7 2252.7,1815.6 C2259.4,1812.5 2266.0,1808.7 2272.7,1804.5 C2279.4,1800.3 2286.0,1795.6 2292.7,1790.8 C2299.4,1786.0 2306.0,1781.2 2312.7,1776.7 C2319.4,1772.2 2326.0,1768.3 2332.7,1765.1 C2339.4,1761.9 2346.0,1759.6 2352.7,1758.4 C2359.4,1757.2 2366.0,1757.1 2372.7,1758.0 C2379.4,1758.9 2386.0,1760.9 2392.7,1763.7 C2399.4,1766.5 2406.0,1770.2 2412.7,1774.4 C2419.4,1778.6 2426.0,1783.4 2432.7,1788.4 C2439.4,1793.4 2446.0,1798.6 2452.7,1803.3 C2459.4,1808.0 2466.0,1812.4 2472.7,1815.7 C2478.5,1818.6 2484.2,1820.6 2490.0,1821.4" stroke="#b9bfca" stroke-width="6" stroke-dasharray="2.6 13.8"/>
<path d="M1952.7,1858.1 C1959.4,1855.2 1966.0,1852.2 1972.7,1849.2 C1979.4,1846.2 1986.0,1843.0 1992.7,1839.8 C1999.4,1836.6 2006.0,1833.2 2012.7,1829.7 C2019.4,1826.2 2026.0,1822.6 2032.7,1818.9 C2039.4,1815.2 2046.0,1811.4 2052.7,1807.6 C2059.4,1803.8 2066.0,1799.9 2072.7,1796.1 C2079.4,1792.3 2086.0,1788.4 2092.7,1784.8 C2099.4,1781.2 2106.0,1777.7 2112.7,1774.5 C2119.4,1771.3 2126.0,1768.4 2132.7,1765.8 C2139.4,1763.2 2146.0,1761.0 2152.7,1759.2 C2159.4,1757.4 2166.0,1755.9 2172.7,1754.7 C2179.4,1753.5 2186.0,1752.5 2192.7,1751.8 C2199.4,1751.1 2206.0,1750.6 2212.7,1750.1 C2219.4,1749.6 2226.0,1749.3 2232.7,1749.1 C2239.4,1748.9 2246.0,1748.9 2252.7,1749.2 C2259.4,1749.5 2266.0,1750.1 2272.7,1751.1 C2279.4,1752.1 2286.0,1753.6 2292.7,1755.9 C2299.4,1758.2 2306.0,1761.1 2312.7,1765.3 C2319.4,1769.5 2326.0,1774.7 2332.7,1781.4 C2339.4,1788.1 2346.0,1796.1 2352.7,1805.1 C2359.4,1814.1 2366.0,1824.1 2372.7,1834.4 C2379.4,1844.7 2386.0,1855.2 2392.7,1864.7 C2399.4,1874.2 2406.0,1882.8 2412.7,1889.4 C2419.4,1896.0 2426.0,1900.7 2432.7,1902.8 C2439.4,1904.9 2446.0,1904.3 2452.7,1901.0 C2459.4,1897.7 2466.0,1891.7 2472.7,1883.5 C2476.5,1878.8 2480.2,1873.5 2484.0,1867.6" stroke="#f9711a" stroke-width="4.3" stroke-linecap="butt"/>
<path d="M1952.7,1916.5 C1959.4,1919.5 1966.0,1923.1 1972.7,1926.9 C1979.4,1930.7 1986.0,1934.5 1992.7,1938.0 C1999.4,1941.5 2006.0,1944.7 2012.7,1947.3 C2019.4,1949.9 2026.0,1951.8 2032.7,1953.0 C2039.4,1954.2 2046.0,1954.6 2052.7,1954.2 C2059.4,1953.8 2066.0,1952.7 2072.7,1950.8 C2079.4,1948.9 2086.0,1946.4 2092.7,1943.4 C2099.4,1940.4 2106.0,1936.8 2112.7,1933.0 C2119.4,1929.2 2126.0,1925.1 2132.7,1920.9 C2139.4,1916.7 2146.0,1912.3 2152.7,1908.0 C2159.4,1903.7 2166.0,1899.5 2172.7,1895.5 C2179.4,1891.5 2186.0,1887.7 2192.7,1884.3 C2199.4,1880.9 2206.0,1877.9 2212.7,1875.5 C2219.4,1873.1 2226.0,1871.2 2232.7,1870.0 C2239.4,1868.8 2246.0,1868.4 2252.7,1868.8 C2259.4,1869.2 2266.0,1870.5 2272.7,1872.5 C2279.4,1874.5 2286.0,1877.1 2292.7,1880.0 C2299.4,1882.9 2306.0,1886.0 2312.7,1888.6 C2319.4,1891.2 2326.0,1893.4 2332.7,1894.7 C2339.4,1896.0 2346.0,1896.5 2352.7,1896.2 C2359.4,1895.9 2366.0,1894.8 2372.7,1893.1 C2379.4,1891.4 2386.0,1889.2 2392.7,1886.9 C2399.4,1884.6 2406.0,1882.1 2412.7,1879.8 C2419.4,1877.5 2426.0,1875.4 2432.7,1873.6 C2439.4,1871.8 2446.0,1870.3 2452.7,1869.2 C2459.4,1868.1 2466.0,1867.3 2472.7,1866.8 C2478.5,1866.4 2484.2,1866.2 2490.0,1866.1" stroke="#722ed1" stroke-width="4.3" stroke-linecap="butt"/>
<path d="M1952.7,1984.5 C1959.4,1981.3 1966.0,1978.4 1972.7,1976.0 C1979.4,1973.6 1986.0,1971.6 1992.7,1970.2 C1999.4,1968.8 2006.0,1967.9 2012.7,1967.6 C2019.4,1967.3 2026.0,1967.5 2032.7,1968.3 C2039.4,1969.1 2046.0,1970.3 2052.7,1972.0 C2059.4,1973.7 2066.0,1975.7 2072.7,1978.1 C2079.4,1980.5 2086.0,1983.1 2092.7,1985.7 C2099.4,1988.3 2106.0,1991.0 2112.7,1993.5 C2119.4,1996.0 2126.0,1998.2 2132.7,1999.9 C2139.4,2001.6 2146.0,2002.6 2152.7,2003.0 C2159.4,2003.4 2166.0,2002.9 2172.7,2001.5 C2179.4,2000.1 2186.0,1997.6 2192.7,1994.1 C2199.4,1990.6 2206.0,1985.8 2212.7,1980.1 C2219.4,1974.4 2226.0,1967.7 2232.7,1960.1 C2239.4,1952.5 2246.0,1944.2 2252.7,1935.5 C2259.4,1926.8 2266.0,1917.9 2272.7,1909.3 C2279.4,1900.7 2286.0,1892.4 2292.7,1885.1 C2299.4,1877.8 2306.0,1871.3 2312.7,1866.4 C2319.4,1861.5 2326.0,1858.1 2332.7,1856.7 C2339.4,1855.3 2346.0,1856.0 2352.7,1858.7 C2359.4,1861.4 2366.0,1866.0 2372.7,1871.8 C2379.4,1877.6 2386.0,1884.5 2392.7,1891.0 C2399.4,1897.5 2406.0,1903.6 2412.7,1908.2 C2419.4,1912.8 2426.0,1915.8 2432.7,1916.7 C2439.4,1917.6 2446.0,1916.2 2452.7,1912.6 C2459.4,1909.0 2466.0,1903.0 2472.7,1895.3 C2476.8,1890.6 2480.9,1885.3 2485.0,1879.6" stroke="#1a91ff" stroke-width="4.3" stroke-linecap="butt"/>
<path d="M1952.7,1709.5 C1959.4,1718.9 1966.0,1728.5 1972.7,1737.7 C1979.4,1746.9 1986.0,1755.9 1992.7,1764.0 C1999.4,1772.1 2006.0,1779.4 2012.7,1785.7 C2019.4,1792.0 2026.0,1797.2 2032.7,1801.2 C2039.4,1805.2 2046.0,1808.0 2052.7,1809.6 C2059.4,1811.2 2066.0,1811.5 2072.7,1810.8 C2079.4,1810.1 2086.0,1808.4 2092.7,1805.7 C2099.4,1803.0 2106.0,1799.5 2112.7,1795.5 C2119.4,1791.5 2126.0,1787.0 2132.7,1782.2 C2139.4,1777.4 2146.0,1772.5 2152.7,1767.6 C2159.4,1762.7 2166.0,1758.0 2172.7,1753.7 C2179.4,1749.4 2186.0,1745.6 2192.7,1742.6 C2199.4,1739.6 2206.0,1737.5 2212.7,1736.5 C2219.4,1735.5 2226.0,1735.7 2232.7,1737.5 C2239.4,1739.3 2246.0,1742.6 2252.7,1747.4 C2259.4,1752.2 2266.0,1758.4 2272.7,1765.6 C2279.4,1772.8 2286.0,1780.9 2292.7,1788.9 C2299.4,1796.9 2306.0,1804.9 2312.7,1811.9 C2319.4,1818.9 2326.0,1825.0 2332.7,1829.7 C2339.4,1834.4 2346.0,1837.8 2352.7,1839.7 C2359.4,1841.6 2366.0,1842.2 2372.7,1841.5 C2379.4,1840.8 2386.0,1838.7 2392.7,1835.7 C2399.4,1832.7 2406.0,1828.7 2412.7,1824.2 C2419.4,1819.7 2426.0,1814.6 2432.7,1809.5 C2439.4,1804.4 2446.0,1799.4 2452.7,1795.1 C2459.4,1790.8 2466.0,1787.3 2472.7,1785.5 C2475.1,1784.8 2477.6,1784.5 2480.0,1784.3" stroke="#57b865" stroke-width="4.3" stroke-linecap="butt"/>
</svg>
<span style="left:1922.5px;top:1590.5px;font-size:28px;color:#3b4560;transform:translateX(-100%);">50</span>
<span style="left:1922.5px;top:1676.7px;font-size:28px;color:#3b4560;transform:translateX(-100%);">40</span>
<span style="left:1922.5px;top:1762.7px;font-size:28px;color:#3b4560;transform:translateX(-100%);">30</span>
<span style="left:1922.5px;top:1848.8px;font-size:28px;color:#3b4560;transform:translateX(-100%);">20</span>
<span style="left:1922.5px;top:1934.7px;font-size:28px;color:#3b4560;transform:translateX(-100%);">10</span>
<span style="left:1922.5px;top:2020.6px;font-size:28px;color:#3b4560;transform:translateX(-100%);">0</span>
<span style="left:1990.5px;top:2066.2px;font-size:28.6px;color:#3b4560;transform:translateX(-50%);">3 Aug</span>
<span style="left:2162.0px;top:2066.2px;font-size:28.6px;color:#3b4560;transform:translateX(-50%);">6 Aug</span>
<span style="left:2333.5px;top:2066.2px;font-size:28.6px;color:#3b4560;transform:translateX(-50%);">9 Aug</span>
<span style="left:2505.0px;top:2066.2px;font-size:28.6px;color:#3b4560;transform:translateX(-50%);">12 Aug</span>
</div>
</body>
</html>
